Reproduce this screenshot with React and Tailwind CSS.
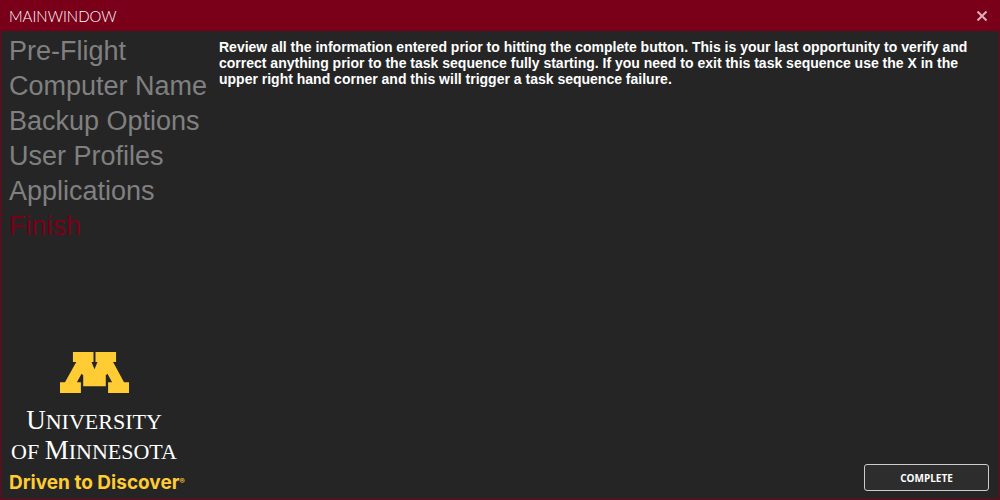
const steps = [
  'Pre-Flight',
  'Computer Name',
  'Backup Options',
  'User Profiles',
  'Applications',
  'Finish',
];

function TitleBar() {
  return (
    <header className="flex h-[30px] shrink-0 items-center justify-between bg-[#7a0019] pr-[11px] pl-2">
      <h1 className="font-['Lato',sans-serif] text-[15px] leading-5 font-light text-white">MAINWINDOW</h1>
      <button type="button" aria-label="Close" className="flex size-3 items-center justify-center text-[#d9b0b8]">
        <svg viewBox="0 0 10 10" className="size-[10px]" fill="none" stroke="currentColor" strokeWidth="2">
          <path d="M0.5 0.5 9.5 9.5M9.5 0.5 0.5 9.5" />
        </svg>
      </button>
    </header>
  );
}

function Brand() {
  return (
    <div className="flex w-[170px] flex-col items-center pb-1 whitespace-nowrap">
      <svg viewBox="178 36 208 123" className="h-[41px] w-[69px]" fill="#ffcc33" aria-hidden="true">
        <path d="M217 36H279V66H273L282 88L291 66H285V36H347V66H338L371 127H386V159H323V127H335L321 101L316 106V139H248V106L243 101L229 127H241V159H178V127H193L227 66H217Z" />
      </svg>
      <div className="mt-[14px] text-center font-['Liberation_Serif',serif] text-[22px] leading-[30px] text-white">
        <div><span className="text-[27px] leading-none">U</span>NIVERSITY</div>
        <div>OF <span className="text-[27px] leading-none">M</span>INNESOTA</div>
      </div>
      <div className="mt-1 flex self-start font-['Inter',sans-serif] text-[19px] leading-6 font-bold text-[#ffcc33]">
        Driven to Discover<span className="text-[8px] leading-5">®</span>
      </div>
    </div>
  );
}

export default function App() {
  return (
    <div className="flex min-h-screen flex-col border border-[#7a0019] bg-[#252525] font-['Liberation_Sans',sans-serif]">
      <TitleBar />
      <div className="flex grow">
        <aside className="flex w-[210px] shrink-0 flex-col justify-between pl-2">
          <nav aria-label="Steps" className="pt-[3px]">
            <ol>
              {steps.map((step) => (
                <li key={step}>
                  <a
                    href="#"
                    aria-current={step === 'Finish' ? 'step' : undefined}
                    className="block text-[27px] leading-[35px] whitespace-nowrap text-[#808080] aria-[current=step]:text-[#7a0019]"
                  >
                    {step}
                  </a>
                </li>
              ))}
            </ol>
          </nav>
          <Brand />
        </aside>
        <main className="flex grow flex-col justify-between pt-2 pr-[10px] pb-2 pl-2">
          <p className="pr-4 text-sm leading-4 font-bold text-white">
            Review all the information entered prior to hitting the complete button. This is your last opportunity to verify and correct anything prior to the task sequence fully starting. If you need to exit this task sequence use the X in the upper right hand corner and this will trigger a task sequence failure.
          </p>
          <button
            type="button"
            className="h-[27px] w-[125px] self-end rounded-[3px] border border-[#cccccc] bg-[#2d2d2d] font-['Open_Sans',sans-serif] text-[10px] leading-4 font-bold text-white"
          >
            COMPLETE
          </button>
        </main>
      </div>
    </div>
  );
}
